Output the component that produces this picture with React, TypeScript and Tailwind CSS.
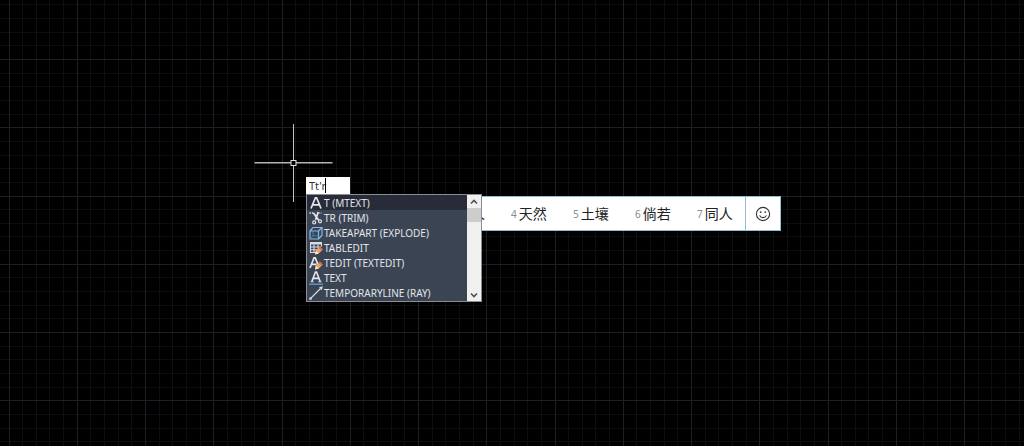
import React, { useState } from 'react'

const GRID_STEP = 13.65;
const GRID_X = 9;
const GRID_Y = 59.5;

const LetterA = () => (
  <path d="M2 12.5L6.4 1.8h1.2L12 12.5M3.8 8.8h6.4" fill="none" stroke="#e4e7ec" strokeWidth="1.7" />
);

const Pencil = () => (
  <>
    <path d="M6 13.6l.9-4 4-4 2.9 2.9-4 4z" fill="#e9a56c" />
    <path d="M6 13.6l.9-4 2.9 2.9z" fill="#f6e6d2" />
    <path d="M9.6 6.9l1.3-1.3 2.9 2.9-1.3 1.3z" fill="#d8653f" />
  </>
);

const icons: Record<string, React.ReactNode> = {
  mtext: <LetterA />,
  trim: (
    <g fill="none" stroke="#e4e7ec">
      <path d="M4.5 2l5 7M9.3 1L6.5 8.8" strokeWidth="1.8" />
      <circle cx="5.2" cy="11.4" r="1.5" strokeWidth="1.2" />
      <circle cx="11" cy="10.3" r="1.5" strokeWidth="1.2" />
      <path d="M.5 2h4" strokeWidth="1.3" strokeDasharray="1.4 1" />
      <path d="M10 2h3" strokeWidth="1.3" strokeDasharray="1.4 1" opacity=".6" />
    </g>
  ),
  explode: (
    <g fill="none" stroke="#7fbbe6" strokeWidth="1.2">
      <path d="M1 5h8.5v8H1zM1 5l3-3.5h9L9.5 5M13 1.5v7.7L9.5 13" />
      <path d="M4 5v4.8M4 9.8h5.5M4 9.8L1 13" stroke="#4d8dc4" strokeWidth=".8" />
    </g>
  ),
  tabledit: (
    <>
      <path d="M1 1h12v2.5H1z" fill="#d9dde3" />
      <path d="M1.5 1.5v10h6M1 6h11M1 8.8h7M5 3.5v8M9 3.5v4M12.5 1.5v4" fill="none" stroke="#d9dde3" strokeWidth="1.1" />
      <Pencil />
    </>
  ),
  tedit: (
    <>
      <path d="M1 12L5 1.8h1.2L9 8.5M2.6 8.4h5" fill="none" stroke="#e4e7ec" strokeWidth="1.7" />
      <Pencil />
    </>
  ),
  text: (
    <>
      <path d="M2.8 10.5L6.5 1h1l3.7 9.5M4 7.4h6" fill="none" stroke="#e4e7ec" strokeWidth="1.6" />
      <path d="M1.6 10.8h3M9.4 10.8h3" stroke="#e4e7ec" />
      <path d="M0 13.2h14" stroke="#5fa3da" strokeWidth="1.3" />
    </>
  ),
  ray: (
    <>
      <path d="M1.5 12.5l10-10" stroke="#d9dde3" strokeWidth="1.1" />
      <path d="M13.8.3l-1 3.9L10 1.3z" fill="#d9dde3" />
      <path d="M.3 11.5h2.3v2.3H.3z" fill="#d9dde3" />
    </>
  ),
};

const commands = [
  { icon: 'mtext', label: 'T (MTEXT)' },
  { icon: 'trim', label: 'TR (TRIM)' },
  { icon: 'explode', label: 'TAKEAPART (EXPLODE)' },
  { icon: 'tabledit', label: 'TABLEDIT' },
  { icon: 'tedit', label: 'TEDIT (TEXTEDIT)' },
  { icon: 'text', label: 'TEXT' },
  { icon: 'ray', label: 'TEMPORARYLINE (RAY)' },
];

const candidates = [
  { key: 4, word: '天然' },
  { key: 5, word: '土壤' },
  { key: 6, word: '倘若' },
  { key: 7, word: '同人' },
];

function DrawingGrid() {
  const lines = Array.from({ length: 200 }, (_, i) => i - 5);
  return (
    <svg className="absolute inset-0 w-full h-full" aria-hidden="true">
      {/* minor lines first, every fifth line is drawn brighter on top */}
      {[false, true].map((major) => (
        <g key={String(major)} stroke={major ? '#1e1e26' : '#0e0e10'}>
          {lines.filter((i) => (i % 5 === 0) === major).map((i) => {
            const x = Math.floor(GRID_X + i * GRID_STEP) + 0.5;
            const y = Math.floor(GRID_Y + i * GRID_STEP) + 0.5;
            return (
              <React.Fragment key={i}>
                <line x1={x} x2={x} y1="0" y2="100%" />
                <line x1="0" x2="100%" y1={y} y2={y} />
              </React.Fragment>
            );
          })}
        </g>
      ))}
    </svg>
  );
}

function Crosshair() {
  return (
    <svg className="absolute left-[254px] top-[124px]" width="79" height="78" viewBox="0 0 79 78" fill="none" aria-hidden="true">
      <path d="M39.5 0v36M39.5 42v36" stroke="#c4c4c4" />
      <path d="M.5 38.8H37M42 38.8h36.5" stroke="#b4b4b4" strokeWidth="1.4" />
      <rect x="37" y="36.5" width="5" height="5" stroke="#e2e2e2" />
    </svg>
  );
}

function CandidateBar() {
  return (
    <div className="absolute left-[470px] top-[196px] flex items-stretch h-[35px] bg-white border border-[#8cc0d2] text-[#222]">
      <div className="flex items-center">
        <span className="w-4 text-sm leading-5">人</span>
        {candidates.map((c) => (
          <button key={c.key} type="button" className="flex items-center gap-0.5 w-[62px] pl-6 text-sm leading-5 whitespace-nowrap">
            <span className="text-[10px] text-[#8a8a8a]">{c.key}</span>
            {c.word}
          </button>
        ))}
      </div>
      <button type="button" aria-label="Emoji" className="flex items-center justify-center w-[35px] ml-2.5 border-l border-[#8cc0d2]">
        <svg width="16" height="16" viewBox="0 0 16 16" fill="none" stroke="#333" strokeWidth="1.1">
          <circle cx="8" cy="8" r="6.6" />
          <path d="M4.6 9.4c1.3 2.9 5.5 2.9 6.8 0" />
          <circle cx="5.7" cy="6.1" r=".9" fill="#333" stroke="none" />
          <circle cx="10.3" cy="6.1" r=".9" fill="#333" stroke="none" />
        </svg>
      </button>
    </div>
  );
}

function CommandPrompt() {
  const [value, setValue] = useState("Tt'r");
  const [active, setActive] = useState(0);

  return (
    <div className="absolute left-[306px] top-[177px] w-44">
      <div className="relative w-11">
        <input
          type="text"
          aria-label="Command"
          value={value}
          onChange={(e) => setValue(e.target.value)}
          className="block w-full h-[17px] pl-[3px] bg-white text-[11px] leading-4 text-[#333] outline-none"
        />
        <span className="absolute left-[19px] top-px w-px h-[15px] bg-black"></span>
      </div>

      {/* Suggestions */}
      <div className="flex border border-[#8a8d94] bg-[#3b4453]">
        <ul className="flex-1 flex flex-col h-[106px]">
          {commands.map((command, i) => (
            <li key={command.label} className="flex-1 flex">
              <button
                type="button"
                onClick={() => setActive(i)}
                className={`flex items-center gap-px w-full pl-0.5 text-[10px] leading-[14px] text-[#e2e5ea] whitespace-nowrap ${i === active ? 'bg-[#272c38]' : ''}`}
              >
                <svg className="w-3.5 h-3.5 shrink-0" viewBox="0 0 14 14">{icons[command.icon]}</svg>
                {command.label}
              </button>
            </li>
          ))}
        </ul>
        <div className="flex flex-col w-[14px] bg-[#f0f0f0]">
          <button type="button" aria-label="Scroll up" className="flex items-center justify-center h-[13px]">
            <svg width="8" height="6" viewBox="0 0 8 6" fill="none" stroke="#505050" strokeWidth="1.6"><path d="M1 4.5l3-3 3 3" /></svg>
          </button>
          <div className="flex-1">
            <div className="h-3.5 bg-[#cdcdcd]"></div>
          </div>
          <button type="button" aria-label="Scroll down" className="flex items-center justify-center h-[13px]">
            <svg width="8" height="6" viewBox="0 0 8 6" fill="none" stroke="#505050" strokeWidth="1.6"><path d="M1 1.5l3 3 3-3" /></svg>
          </button>
        </div>
      </div>
    </div>
  );
}

export default function App() {
  return (
    <main className="relative min-h-screen overflow-hidden bg-black font-['Noto_Sans','Noto_Sans_CJK_SC',sans-serif]">
      <DrawingGrid />
      <Crosshair />
      <CandidateBar />
      <CommandPrompt />
    </main>
  );
}
